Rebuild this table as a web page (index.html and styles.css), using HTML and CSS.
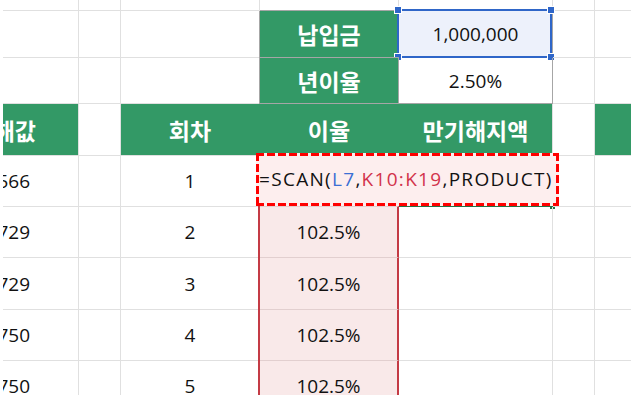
FILE: index.html
```html
<!DOCTYPE html>
<html lang="ko">
<head>
    <meta charset="UTF-8">
    <meta name="viewport" content="width=device-width, initial-scale=1.0">
    <title>적금 만기해지액</title>
    <link rel="stylesheet" href="styles.css">
</head>
<body>

    <!-- sheet grid: columns A..G, rows from the top of the input block down -->
    <div class="sheet">
        <!-- row 0 (partial) -->
        <div class="cell"></div><div class="cell"></div><div class="cell"></div><div class="cell"></div><div class="cell"></div><div class="cell"></div><div class="cell"></div>

        <!-- inputs -->
        <div class="cell"></div><div class="cell"></div><div class="cell"></div>
        <div class="cell label">납입금</div>
        <div class="cell input picked">
            1,000,000
            <div class="select-box">
                <span class="knob tl"></span><span class="knob tr"></span>
                <span class="knob bl"></span><span class="knob br"></span>
            </div>
        </div>
        <div class="cell"></div><div class="cell"></div>

        <div class="cell"></div><div class="cell"></div><div class="cell"></div>
        <div class="cell label">년이율</div>
        <div class="cell input">2.50%</div>
        <div class="cell"></div><div class="cell"></div>

        <!-- table header -->
        <div class="cell head cut cut-head"><span>만기해값</span></div>
        <div class="cell"></div>
        <div class="cell head joined">회차</div>
        <div class="cell head joined">이율</div>
        <div class="cell head">만기해지액</div>
        <div class="cell"></div>
        <div class="cell head"></div>

        <!-- data rows -->
        <div class="cell cut"><span>1,025,566</span></div>
        <div class="cell"></div>
        <div class="cell num">1</div>
        <div class="cell rate">
            <div class="formula">=SCAN(<span class="ref-blue">L7</span>,<span class="ref-red">K10:K19</span>,PRODUCT)</div>
        </div>
        <div class="cell active"></div>
        <div class="cell"></div><div class="cell"></div>

        <div class="cell cut"><span>1,050,729</span></div>
        <div class="cell"></div>
        <div class="cell num">2</div>
        <div class="cell rate">102.5%</div>
        <div class="cell"></div><div class="cell"></div><div class="cell"></div>

        <div class="cell cut"><span>1,075,729</span></div>
        <div class="cell"></div>
        <div class="cell num">3</div>
        <div class="cell rate">102.5%</div>
        <div class="cell"></div><div class="cell"></div><div class="cell"></div>

        <div class="cell cut"><span>1,100,750</span></div>
        <div class="cell"></div>
        <div class="cell num">4</div>
        <div class="cell rate">102.5%</div>
        <div class="cell"></div><div class="cell"></div><div class="cell"></div>

        <div class="cell cut"><span>1,125,750</span></div>
        <div class="cell"></div>
        <div class="cell num">5</div>
        <div class="cell rate">102.5%</div>
        <div class="cell"></div><div class="cell"></div><div class="cell"></div>
    </div>

</body>
</html>
```

FILE: styles.css
```css
body {
    margin: 0;
    padding: 0 0 0 3px;
    background-color: #fff;
    font-family: 'Open Sans', 'Noto Sans CJK KR', sans-serif;
    font-size: 19px;
    color: #111;
    overflow: hidden;
}
.sheet {
    display: grid;
    grid-template-columns: 76px 42px 139px 139px 154px 42px 100px;
    grid-template-rows: 11px 47px 46px 52px 51px 51px 52px 51px 51px;
}
.cell {
    box-sizing: border-box;
    border-right: 1px solid #e0e0e0;
    border-bottom: 1px solid #e0e0e0;
    display: flex;
    align-items: center;
    justify-content: center;
    position: relative;
    white-space: nowrap;
}

/* green labels of the input block */
.label {
    background-color: #339966;
    color: #fff;
    font-weight: bold;
    font-size: 23px;
    border-color: #a6a6a6;
    box-shadow: -1px 0 0 #a6a6a6, 0 -1px 0 #a6a6a6;
}
.input {
    border-color: #a6a6a6;
}
.picked {
    background-color: #edf1fb;
}
.select-box {
    position: absolute;
    left: -2px;
    top: -2px;
    right: 0;
    bottom: -1px;
    border: 2px solid #2f66c8;
}
.knob {
    position: absolute;
    width: 6px;
    height: 6px;
    background-color: #2f66c8;
    border: 1px solid #fff;
}
.knob.tl { left: -5px; top: -5px; }
.knob.tr { right: -5px; top: -5px; }
.knob.bl { left: -5px; bottom: -5px; }
.knob.br { right: -5px; bottom: -5px; }

/* table header */
.head {
    background-color: #339966;
    color: #fff;
    font-weight: bold;
    font-size: 23px;
}
.joined {
    border-right-color: #339966;
}

/* column A is scrolled off to the left, only its tail shows */
.cut {
    overflow: hidden;
    justify-content: flex-end;
    padding-right: 48px;
}
.cut-head {
    padding-right: 42px;
}

/* rate column referenced by the formula */
.rate {
    background-color: #f9e9e9;
    border-bottom-color: #e2cfcf;
    border-right: 2px solid #c43b45;
    box-shadow: -2px 0 0 #c43b45;
}
.formula {
    position: absolute;
    left: -4px;
    top: -3px;
    width: 303px;
    height: 53px;
    box-sizing: border-box;
    padding: 0 0 1px 3px;
    display: flex;
    align-items: center;
    letter-spacing: 1.3px;
    background-color: #fdeeee;
    background-image:
        repeating-linear-gradient(90deg, #f00 0 8px, transparent 8px 11px),
        repeating-linear-gradient(90deg, #f00 0 8px, transparent 8px 11px),
        repeating-linear-gradient(180deg, #f00 0 8px, transparent 8px 11px),
        repeating-linear-gradient(180deg, #f00 0 8px, transparent 8px 11px);
    background-size: 100% 3px, 100% 3px, 3px 100%, 3px 100%;
    background-position: left top, left bottom, left top, right top;
    background-repeat: no-repeat;
    z-index: 2;
}
.ref-blue {
    color: #3b6fd4;
}
.ref-red {
    color: #d2334b;
}

/* active cell below the input, partly hidden by the formula box */
.active {
    border-bottom: 2px solid #217346;
}
.active::after {
    content: "";
    position: absolute;
    right: -3px;
    bottom: -4px;
    width: 5px;
    height: 5px;
    background-color: #217346;
}
```
